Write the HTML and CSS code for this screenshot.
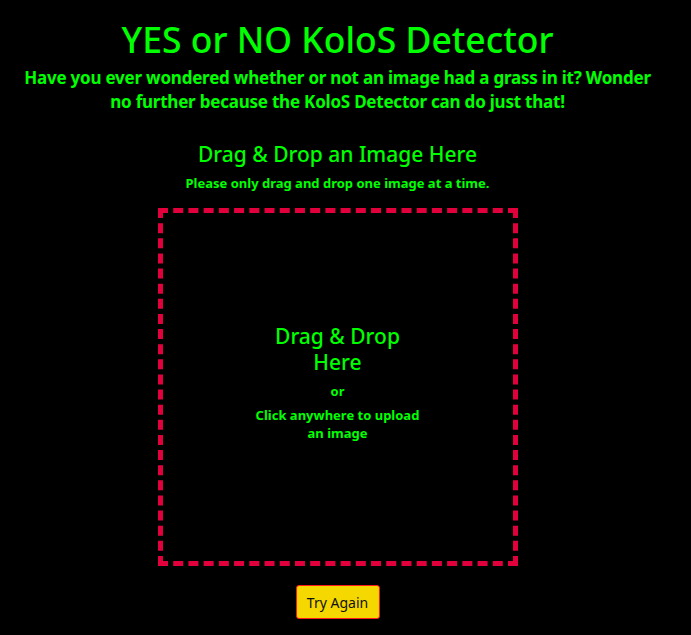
FILE: index.html
```html
<!DOCTYPE html>
<html lang="en">
<head>
<meta charset="utf-8">
<title>YES or NO KoloS Detector</title>
<link rel="stylesheet" href="styles.css">
</head>
<body>
<main class="page">
  <h1 class="title">YES or NO KoloS Detector</h1>
  <p class="subtitle">Have you ever wondered whether or not an image had a grass in it? Wonder no further because the KoloS Detector can do just that!</p>
  <h2 class="drop-heading">Drag &amp; Drop an Image Here</h2>
  <p class="note">Please only drag and drop one image at a time.</p>
  <div class="dropzone">
    <div class="drop-inner">
      <div class="drop-title">Drag &amp; Drop Here</div>
      <div class="drop-or">or</div>
      <div class="drop-click">Click anywhere to upload an image</div>
    </div>
  </div>
  <div class="actions">
    <button class="try-btn" type="button">Try Again</button>
  </div>
</main>
</body>
</html>
```
FILE: styles.css
```css
html, body {
  margin: 0;
  padding: 0;
  background: #000;
}
body {
  font-family: "Noto Sans", "Open Sans", sans-serif;
  color: #00ff00;
}
.page {
  width: 675px;
  text-align: center;
  padding-top: 15px;
}
.title {
  font-size: 35.5px;
  font-weight: 500;
  line-height: 48px;
  margin: 0;
}
.subtitle {
  font-size: 17px;
  font-weight: 700;
  line-height: 24px;
  letter-spacing: -0.22px;
  margin: 3px 0 0;
  padding: 0 20px;
}
.drop-heading {
  font-size: 21px;
  font-weight: 500;
  line-height: 28px;
  margin: 26px 0 0;
}
.note {
  font-size: 13px;
  font-weight: 700;
  line-height: 18px;
  margin: 6px 0 0;
}
.dropzone {
  width: 350px;
  height: 348px;
  margin: 16px auto 0;
  border: 5px dashed #e2003c;
  display: flex;
  align-items: center;
  justify-content: center;
}
.drop-inner {
  width: 170px;
  padding-bottom: 10px;
}
.drop-title {
  font-size: 21px;
  font-weight: 500;
  line-height: 26px;
}
.drop-or {
  font-size: 13px;
  font-weight: 700;
  line-height: 18px;
  margin-top: 7px;
}
.drop-click {
  font-size: 13px;
  font-weight: 700;
  line-height: 18px;
  margin-top: 6px;
}
.actions {
  margin-top: 19px;
  display: flex;
  justify-content: center;
}
.try-btn {
  font-family: "Noto Sans", "Open Sans", sans-serif;
  font-size: 14px;
  color: #111;
  background: #f5d800;
  border: 1px solid #ff1a1a;
  border-radius: 3px;
  padding: 0 10px;
  height: 34px;
  width: 84px;
}
```
